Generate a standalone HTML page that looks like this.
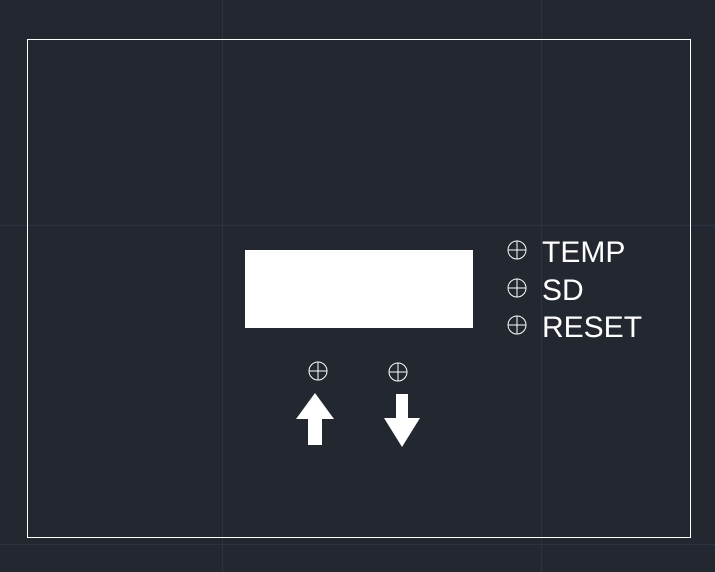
<!DOCTYPE html>
<html><head><style>
html,body{margin:0;padding:0;background:#222730;width:715px;height:572px;overflow:hidden}
</style></head><body>
<svg width="715" height="572" xmlns="http://www.w3.org/2000/svg" style="display:block">
<rect width="715" height="572" fill="#222730"/>
<g stroke="#2c3340" stroke-width="1">
<line x1="222.5" y1="0" x2="222.5" y2="572"/>
<line x1="541.5" y1="0" x2="541.5" y2="572"/>
<line x1="0" y1="225.5" x2="715" y2="225.5"/>
<line x1="0" y1="544.5" x2="715" y2="544.5"/>
</g>
<rect x="27.5" y="39.5" width="663" height="498" fill="none" stroke="#fff" stroke-width="1"/>
<rect x="245" y="250" width="228" height="78" fill="#fff"/>
<g fill="none" stroke="#fff" stroke-width="1">
<circle cx="517" cy="250" r="9"/><line x1="508" y1="250" x2="526" y2="250"/><line x1="517" y1="241" x2="517" y2="259"/>
<circle cx="517" cy="288" r="9"/><line x1="508" y1="288" x2="526" y2="288"/><line x1="517" y1="279" x2="517" y2="297"/>
<circle cx="517" cy="325" r="9"/><line x1="508" y1="325" x2="526" y2="325"/><line x1="517" y1="316" x2="517" y2="334"/>
<circle cx="318" cy="371" r="9"/><line x1="309" y1="371" x2="327" y2="371"/><line x1="318" y1="362" x2="318" y2="380"/>
<circle cx="398" cy="372" r="9"/><line x1="389" y1="372" x2="407" y2="372"/><line x1="398" y1="363" x2="398" y2="381"/>
</g>
<polygon fill="#fff" points="315,393 334,419 322,419 322,445 308,445 308,419 296,419"/>
<polygon fill="#fff" points="396,394 408,394 408,418 420,418 402,447 384,418 396,418"/>
<g fill="#fff" font-family="Liberation Sans, sans-serif" font-size="30">
<text x="542" y="262">TEMP</text>
<text x="542" y="300">SD</text>
<text x="542" y="337">RESET</text>
</g>
</svg>
</body></html>
